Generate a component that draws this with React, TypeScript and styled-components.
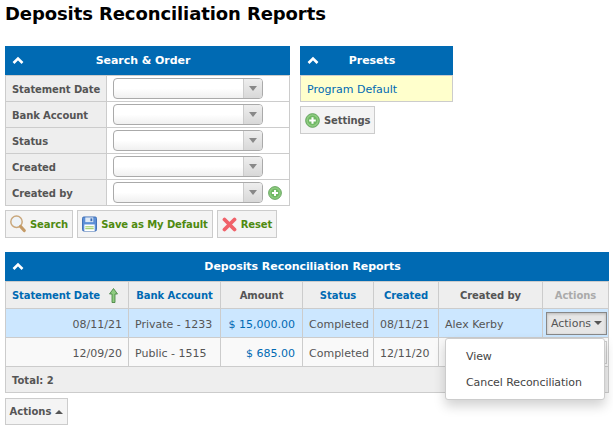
import React from "react";
import styled, { createGlobalStyle } from "styled-components";

const Global = createGlobalStyle`
  html, body { margin: 0; padding: 0; background: #fff; }
  body { font-family: "DejaVu Sans", Verdana, sans-serif; font-size: 11px; color: #555; }
  * { box-sizing: border-box; }
`;
const Page = styled.div`
  position: relative;
  width: 613px;
  height: 428px;
  padding: 0 5px;
  overflow: hidden;
`;
const Title = styled.h1`
  margin: 0;
  padding-top: 3px;
  height: 46px;
  font-size: 18px;
  line-height: 22px;
  font-weight: 700;
  color: #000;
  letter-spacing: -0.1px;
`;
const TopRow = styled.div`
  display: flex;
  gap: 10px;
  align-items: flex-start;
`;
const Column = styled.div<{ $w: number }>`
  width: ${(p) => p.$w}px;
`;
const PanelHeader = styled.div`
  position: relative;
  height: 29px;
  padding-right: 9px;
  background: #006ab3;
  color: #fff;
  font-weight: 700;
  font-size: 11px;
  letter-spacing: -0.05px;
  display: flex;
  align-items: center;
  justify-content: center;
`;
const Chevron = styled.svg`
  position: absolute;
  left: 7px;
  top: 10px;
`;
const FormTable = styled.div`
  border: 1px solid #ccc;
  border-bottom: 0;
`;
const FormRow = styled.div`
  display: flex;
  height: 26px;
  border-bottom: 1px solid #ccc;
`;
const FormLabel = styled.div`
  width: 101px;
  background: #eee;
  border-right: 1px solid #ccc;
  font-weight: 700;
  font-size: 10px;
  letter-spacing: -0.1px;
  color: #555;
  padding: 2px 0 0 6px;
  display: flex;
  align-items: center;
`;
const FormField = styled.div`
  flex: 1;
  padding-left: 6px;
  display: flex;
  align-items: center;
  gap: 5px;
`;
const Select = styled.div`
  width: 150px;
  height: 21px;
  border: 1px solid #aaa;
  border-radius: 4px;
  background: linear-gradient(#fff 50%, #f0f0f0);
  display: flex;
  justify-content: flex-end;
`;
const SelectArrow = styled.div`
  width: 19px;
  border-left: 1px solid #ccc;
  border-radius: 0 3px 3px 0;
  background: linear-gradient(#eee, #d8d8d8);
  display: flex;
  align-items: center;
  justify-content: center;
  &::after {
    content: "";
    border-left: 4px solid transparent;
    border-right: 4px solid transparent;
    border-top: 5px solid #888;
  }
`;
const ButtonRow = styled.div`
  display: flex;
  gap: 4px;
  margin-top: 4px;
`;
const Button = styled.div<{ $green?: boolean }>`
  height: 28px;
  display: inline-flex;
  align-items: center;
  gap: 4px;
  padding: 0 4px;
  background: #f4f4f4;
  border: 1px solid #ccc;
  font-size: 10px;
  font-weight: 700;
  letter-spacing: -0.1px;
  color: ${(p) => (p.$green ? "#4f8a10" : "#555")};
`;
const PresetBody = styled.div`
  height: 27px;
  background: #ffffcc;
  border: 1px solid #ccc;
  color: #006ab3;
  font-size: 11px;
  padding: 2px 0 0 6px;
  display: flex;
  align-items: center;
`;
const SettingsWrap = styled.div`
  margin-top: 4px;
  display: flex;
`;
const ReportPanel = styled.div`
  margin-top: 14px;
  width: 604px;
`;
const Table = styled.table`
  width: 604px;
  table-layout: fixed;
  border-collapse: collapse;
  font-size: 11px;
`;
const Th = styled.th<{ $link?: boolean; $muted?: boolean }>`
  height: 27px;
  padding: 0;
  background: #eee;
  border: 1px solid #ccc;
  font-size: 10px;
  font-weight: 700;
  letter-spacing: -0.05px;
  text-align: center;
  color: ${(p) => (p.$link ? "#006ab3" : p.$muted ? "#aaa" : "#555")};
`;
const Tr = styled.tr<{ $active?: boolean }>`
  background: ${(p) => (p.$active ? "#cce7ff" : "#f9f9f9")};
`;
const Td = styled.td<{ $align?: string; $blue?: boolean }>`
  height: 29px;
  padding: 2px ${(p) => (p.$blue ? 7 : 6)}px 0 6px;
  border: 1px solid #ccc;
  white-space: nowrap;
  overflow: hidden;
  text-align: ${(p) => p.$align || "left"};
  color: ${(p) => (p.$blue ? "#006ab3" : "#555")};
`;
const ActionCell = styled.td`
  height: 29px;
  padding: 0 6px;
  border: 1px solid #ccc;
  overflow: hidden;
`;
const TotalCell = styled.td`
  height: 26px;
  padding: 1px 6px 0;
  background: #eee;
  border: 1px solid #ccc;
  font-size: 10px;
  font-weight: 700;
`;
const SortHead = styled.span`
  display: inline-flex;
  align-items: center;
  gap: 9px;
  margin-left: -4px;
  letter-spacing: -0.1px;
`;
const ActionBtn = styled.div<{ $open?: boolean }>`
  width: 61px;
  height: 23px;
  margin-left: -3px;
  display: flex;
  align-items: center;
  justify-content: center;
  gap: 3px;
  font-size: 11px;
  color: #555;
  background: ${(p) => (p.$open ? "#e6e6e6" : "#f4f4f4")};
  border: 1px solid ${(p) => (p.$open ? "#888" : "#ccc")};
  box-shadow: ${(p) => (p.$open ? "inset 0 1px 3px rgba(0,0,0,.2)" : "none")};
`;
const Caret = styled.span<{ $up?: boolean }>`
  border-left: 4px solid transparent;
  border-right: 4px solid transparent;
  ${(p) => (p.$up ? "border-bottom: 4px solid #555;" : "border-top: 4px solid #555;")}
`;
const BottomBtn = styled.div`
  margin-top: 5px;
  width: 63px;
  height: 27px;
  display: flex;
  align-items: center;
  justify-content: center;
  gap: 4px;
  background: #f4f4f4;
  border: 1px solid #ccc;
  font-size: 10px;
  font-weight: 700;
  color: #555;
`;
const Menu = styled.div`
  position: absolute;
  left: 445px;
  top: 338px;
  width: 160px;
  height: 62px;
  padding-top: 5px;
  background: #fff;
  border: 1px solid #ccc;
  border-radius: 3px;
  box-shadow: 0 6px 12px rgba(0, 0, 0, 0.18);
`;
const MenuItem = styled.div`
  height: 26px;
  line-height: 26px;
  padding-left: 20px;
  font-size: 11px;
  letter-spacing: -0.08px;
  color: #444;
`;

const Up = () => (
  <Chevron width="12" height="9" viewBox="0 0 12 9">
    <path d="M1.5 7 6 2.5 10.5 7" fill="none" stroke="#fff" strokeWidth="2.6" />
  </Chevron>
);
const PlusIcon = ({ size = 15 }: { size?: number }) => (
  <svg width={size} height={size} viewBox="0 0 16 16">
    <circle cx="8" cy="8" r="7.3" fill="#8ecb80" stroke="#5b9e55" />
    <circle cx="8" cy="8" r="5" fill="#6fb863" />
    <path d="M8 4.5v7M4.5 8h7" stroke="#fff" strokeWidth="2.2" />
  </svg>
);
const SearchIcon = () => (
  <svg width="16" height="18" viewBox="0 0 16 18">
    <circle cx="6.5" cy="6.8" r="5.7" fill="#eef3f8" stroke="#c9a77c" strokeWidth="1.5" />
    <path d="M10.6 11.5l3.6 4" stroke="#c49a66" strokeWidth="3.2" strokeLinecap="round" />
  </svg>
);
const SaveIcon = () => (
  <svg width="15" height="16" viewBox="0 0 16 16">
    <rect x=".5" y=".5" width="15" height="15" rx="1.5" fill="#5c8fd6" stroke="#3b6cb4" />
    <rect x="3.5" y="1" width="8.5" height="5" fill="#dfe9f5" />
    <rect x="9" y="2" width="2" height="3" fill="#3b6cb4" />
    <rect x="2.5" y="8.5" width="11" height="7" fill="#fff" />
    <path d="M3.5 11h9M3.5 13h9" stroke="#8bc34a" />
  </svg>
);
const XIcon = () => (
  <svg width="15" height="15" viewBox="0 0 15 15">
    <path d="M2.5 2.5l10 10M12.5 2.5l-10 10" stroke="#f0626a" strokeWidth="3.8" strokeLinecap="round" />
  </svg>
);
const SortArrow = () => (
  <svg width="9" height="15" viewBox="0 0 9 15">
    <path d="M4.5.5 8.5 6H6v8.5H3V6H.5z" fill="#8ecb80" stroke="#3f7d3a" strokeWidth=".8" />
  </svg>
);

const labels = ["Statement Date", "Bank Account", "Status", "Created", "Created by"];
const widths = [123, 92, 82, 71, 65, 104, 66];

export default function App() {
  return (
    <Page>
      <Global />
      <Title>Deposits Reconciliation Reports</Title>
      <TopRow>
        <Column $w={285}>
          <PanelHeader><Up />Search &amp; Order</PanelHeader>
          <FormTable>
            {labels.map((l, i) => (
              <FormRow key={l}>
                <FormLabel>{l}</FormLabel>
                <FormField>
                  <Select><SelectArrow /></Select>
                  {i === 4 && <PlusIcon size={14} />}
                </FormField>
              </FormRow>
            ))}
          </FormTable>
          <ButtonRow>
            <Button $green><SearchIcon />Search</Button>
            <Button $green><SaveIcon />Save as My Default</Button>
            <Button $green><XIcon />Reset</Button>
          </ButtonRow>
        </Column>
        <Column $w={153}>
          <PanelHeader><Up />Presets</PanelHeader>
          <PresetBody>Program Default</PresetBody>
          <SettingsWrap>
            <Button><PlusIcon />Settings</Button>
          </SettingsWrap>
        </Column>
      </TopRow>
      <ReportPanel>
        <PanelHeader><Up />Deposits Reconciliation Reports</PanelHeader>
        <Table>
          <colgroup>
            {widths.map((w, i) => <col key={i} width={w} />)}
          </colgroup>
          <thead>
            <tr>
              <Th $link><SortHead>Statement Date <SortArrow /></SortHead></Th>
              <Th $link>Bank Account</Th>
              <Th>Amount</Th>
              <Th $link>Status</Th>
              <Th $link>Created</Th>
              <Th>Created by</Th>
              <Th $muted>Actions</Th>
            </tr>
          </thead>
          <tbody>
            <Tr $active>
              <Td $align="right">08/11/21</Td>
              <Td>Private - 1233</Td>
              <Td $align="right" $blue>$ 15,000.00</Td>
              <Td>Completed</Td>
              <Td>08/11/21</Td>
              <Td>Alex Kerby</Td>
              <ActionCell><ActionBtn $open>Actions <Caret /></ActionBtn></ActionCell>
            </Tr>
            <Tr>
              <Td $align="right">12/09/20</Td>
              <Td>Public - 1515</Td>
              <Td $align="right" $blue>$ 685.00</Td>
              <Td>Completed</Td>
              <Td>12/11/20</Td>
              <Td />
              <ActionCell><ActionBtn /></ActionCell>
            </Tr>
            <tr><TotalCell colSpan={7}>Total: 2</TotalCell></tr>
          </tbody>
        </Table>
      </ReportPanel>
      <BottomBtn>Actions <Caret $up /></BottomBtn>
      <Menu>
        <MenuItem>View</MenuItem>
        <MenuItem>Cancel Reconciliation</MenuItem>
      </Menu>
    </Page>
  );
}
